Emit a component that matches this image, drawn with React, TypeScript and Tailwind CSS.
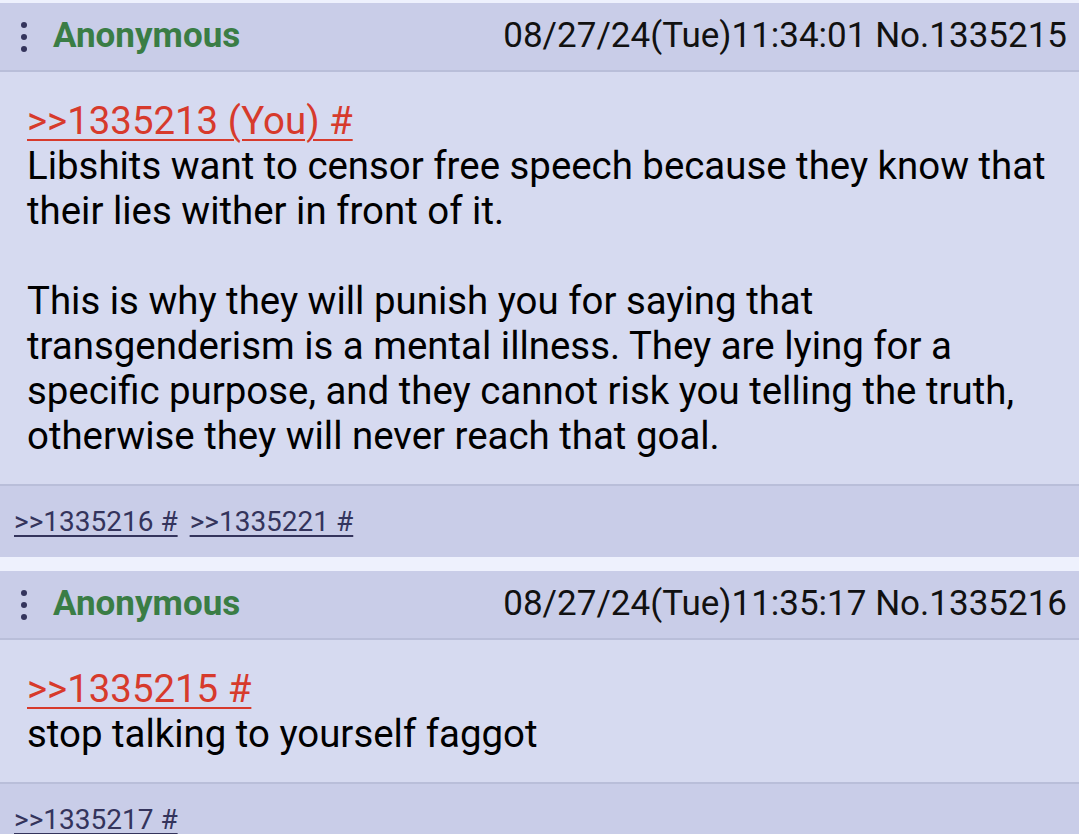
import React from "react";

interface Post {
  no: string;
  date: string;
  quote: string;
  lines: string[];
  backlinks: string[];
}

const posts: Post[] = [
  {
    no: "1335215",
    date: "08/27/24(Tue)11:34:01",
    quote: ">>1335213 (You) #",
    lines: [
      "Libshits want to censor free speech because they know that",
      "their lies wither in front of it.",
      "",
      "This is why they will punish you for saying that",
      "transgenderism is a mental illness. They are lying for a",
      "specific purpose, and they cannot risk you telling the truth,",
      "otherwise they will never reach that goal.",
    ],
    backlinks: [">>1335216 #", ">>1335221 #"],
  },
  {
    no: "1335216",
    date: "08/27/24(Tue)11:35:17",
    quote: ">>1335215 #",
    lines: ["stop talking to yourself faggot"],
    backlinks: [">>1335217 #"],
  },
];

function Dots() {
  return (
    <svg width="8" height="32" viewBox="0 0 8 32" className="shrink-0">
      <circle cx="4" cy="4" r="3" fill="#34345c" />
      <circle cx="4" cy="16" r="3" fill="#34345c" />
      <circle cx="4" cy="28" r="3" fill="#34345c" />
    </svg>
  );
}

function PostCard({ post }: { post: Post }) {
  return (
    <div className="bg-[#d6daf0]">
      <div className="h-[69px] flex items-center justify-between pl-[20px] pr-[12px] bg-[#c9cde8] border-b-2 border-[#b9bed9]">
        <div className="flex items-center gap-[25px]">
          <Dots />
          <span className="text-[35px] font-bold text-[#3a7d45]">Anonymous</span>
        </div>
        <span className="text-[35px] text-[#111]">
          {post.date} No.{post.no}
        </span>
      </div>
      <div className="pl-[27px] pr-3 pt-[26px] pb-[26px] text-[38.4px] leading-[45px] text-black whitespace-nowrap">
        <div>
          <span className="text-[#d73a2c] underline decoration-2 underline-offset-[5px]">
            {post.quote}
          </span>
        </div>
        {post.lines.map((l, i) => (
          <div key={i} className="h-[45px]">
            {l}
          </div>
        ))}
      </div>
      <div className="h-[73px] flex items-center gap-[12px] pl-[14px] pt-[1px] bg-[#c9cde8] border-t-2 border-[#b9bed9]">
        {post.backlinks.map((b) => (
          <span
            key={b}
            className="text-[28px] text-[#34345c] underline underline-offset-[4px]"
          >
            {b}
          </span>
        ))}
      </div>
    </div>
  );
}

export default function App() {
  return (
    <div
      className="w-[1079px] h-[834px] overflow-hidden bg-[#eef1fd] pt-[3px] flex flex-col gap-[14px]"
      style={{ fontFamily: "Roboto, 'Noto Sans', sans-serif" }}
    >
      {posts.map((p) => (
        <PostCard key={p.no} post={p} />
      ))}
    </div>
  );
}
